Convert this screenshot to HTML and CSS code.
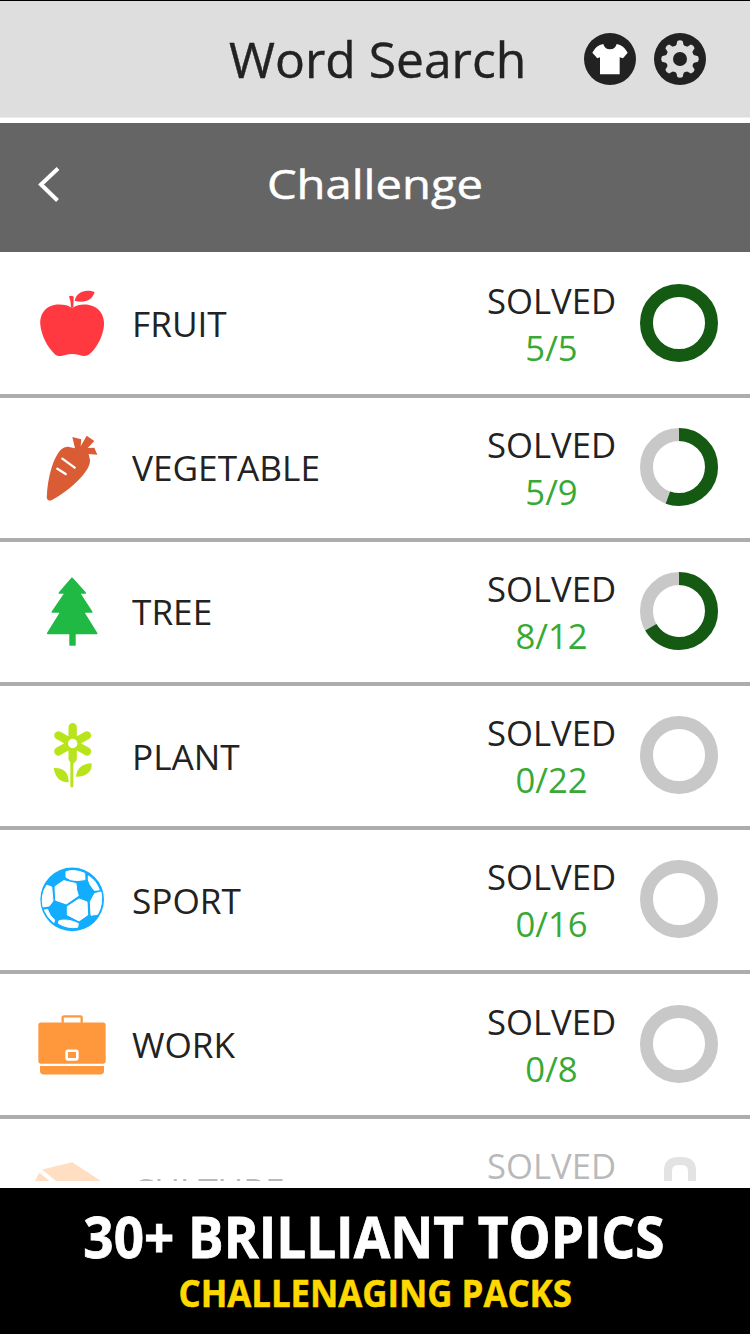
FILE: index.html
```html
<!DOCTYPE html>
<html lang="en">
<head>
<meta charset="utf-8">
<title>Word Search</title>
<link rel="stylesheet" href="styles.css">
</head>
<body>
<div class="app">
  <header class="topbar">
    <h1 class="topbar-title"><span>Word Search</span></h1>
    <div class="topbar-actions">
      <svg class="round-icon" viewBox="0 0 156 156"><circle cx="78" cy="78" r="78" fill="#222"/><path fill="#fff" d="M58 33Q62 49 78 49Q94 49 98 33Q119 37 131 59L117 76L107 73V124H48V73L40 76L25 59Q36 37 58 33Z"/></svg>
      <svg class="round-icon" viewBox="0 0 156 156"><circle cx="78" cy="78" r="78" fill="#222"/><g fill="#dedede"><circle cx="78" cy="78" r="42"/><path id="tooth" d="M61 44Q69 37 70 24Q78 19 86 24Q87 37 95 44V112Q87 119 86 132Q78 137 70 132Q69 119 61 112Z"/><use href="#tooth" transform="rotate(45 78 78)"/><use href="#tooth" transform="rotate(90 78 78)"/><use href="#tooth" transform="rotate(135 78 78)"/></g><circle cx="78" cy="78" r="21" fill="#222"/></svg>
    </div>
  </header>
  <nav class="subbar">
    <svg class="back" viewBox="0 0 24 38"><path d="M21 3.500L4 19.500L20.500 35.500" fill="none" stroke="#fff" stroke-width="4"/></svg>
    <h2 class="subbar-title"><span>Challenge</span></h2>
  </nav>
  <main class="list">
    <section class="row">
      <svg class="topic" viewBox="36 41 240 240" fill="#ff393f"><path d="M157 114C170 103 190 101 207 104C237 110 254 134 252 164C250 198 229 235 208 252C200 259 188 258 178 254Q157 248 136 254C122 259 111 258 104 251C83 231 65 198 61 164C58 134 74 110 102 104C120 101 143 103 157 114Z"/><path d="M147 78Q154 74 161 79L160 112H153Q153 94 147 78Z"/><path d="M164 91C169 67 196 54 224 66C215 94 188 98 164 91Z"/></svg>
      <span class="name">FRUIT</span>
      <div class="score"><span>SOLVED</span><span class="count">5/5</span></div>
      <svg class="ring" viewBox="0 0 78 78"><circle cx="39" cy="39" r="32.500" class="done"/></svg>
    </section>
    <section class="row">
      <svg class="topic" viewBox="36 23 240 240" fill="#da5c34"><path d="M144 79L165 84L157 50L184 57L182 78L200 46L223 62L203 83L223 82L232 103L206 101L210 119C213 151 154 207 96 239C85 244 78 236 81 223C84 174 98 113 124 87Q133 78 144 79Z"/><path d="M127 115L164 142M112 145L137 161" stroke="#fff" stroke-width="7" stroke-linecap="round"/></svg>
      <span class="name">VEGETABLE</span>
      <div class="score"><span>SOLVED</span><span class="count">5/9</span></div>
      <svg class="ring" viewBox="0 0 78 78"><circle cx="39" cy="39" r="32.500" class="track"/><circle cx="39" cy="39" r="32.500" class="done" pathLength="9" stroke-dasharray="5 9" transform="rotate(-90 39 39)"/></svg>
    </section>
    <section class="row">
      <svg class="topic" viewBox="36 21 240 240" fill="#20b944" stroke="#20b944" stroke-width="5" stroke-linejoin="round"><path d="M156 40L196 84H178L215 141H190L230 205H83L123 141H97L136 84H118Z"/><path d="M149 206H166V241H149Z" stroke-width="2"/></svg>
      <span class="name">TREE</span>
      <div class="score"><span>SOLVED</span><span class="count">8/12</span></div>
      <svg class="ring" viewBox="0 0 78 78"><circle cx="39" cy="39" r="32.500" class="track"/><circle cx="39" cy="39" r="32.500" class="done" pathLength="12" stroke-dasharray="8 12" transform="rotate(-90 39 39)"/></svg>
    </section>
    <section class="row">
      <svg class="topic" viewBox="36 18.600 240 240"><g stroke="#b8e41b" stroke-linecap="round" stroke-width="25" fill="none"><path d="M158 52V146M115 77L201 125M115 125L201 77"/></g><path fill="#b8e41b" d="M151 155H165L160 162V230Q156 236 151 230Z"/><circle cx="158" cy="101" r="14" fill="#fff"/><path fill="#b8e41b" d="M101 175Q145 172 146 217C125 218 107 208 101 175ZM215 160C217 187 198 200 168 201C170 174 189 161 215 160Z"/></svg>
      <span class="name">PLANT</span>
      <div class="score"><span>SOLVED</span><span class="count">0/22</span></div>
      <svg class="ring" viewBox="0 0 78 78"><circle cx="39" cy="39" r="32.500" class="track"/></svg>
    </section>
    <section class="row">
      <svg class="topic" viewBox="36 16.200 240 240"><circle cx="156.500" cy="134.500" r="95.500" fill="#12adff"/><g fill="#fff" stroke="#fff" stroke-width="3" stroke-linejoin="round"><path d="M105 96L131 78L168 87L170 106L175 123L139 148L107 137Z"/><path d="M142 156L177 133L201 142L203 181L177 199L142 181Z"/><path d="M138 51Q164 43 194 56L195 75L172 78Q150 78 138 68Z"/><path d="M205 64Q228 77 238 106L223 107Q208 91 205 76Z"/><path d="M224 117L243 112Q250 148 233 179L213 182L211 141Z"/><path d="M117 198Q146 192 175 207L173 218Q142 223 115 206Z"/><path d="M80 92L95 97L99 139L88 154L69 157Q61 121 80 92Z"/><path d="M73 166L83 165Q88 184 104 196L102 204Q83 191 73 166Z"/></g></svg>
      <span class="name">SPORT</span>
      <div class="score"><span>SOLVED</span><span class="count">0/16</span></div>
      <svg class="ring" viewBox="0 0 78 78"><circle cx="39" cy="39" r="32.500" class="track"/></svg>
    </section>
    <section class="row">
      <svg class="topic" viewBox="36 13.800 240 240"><g fill="#ff983c"><rect x="55" y="66" width="202" height="124" rx="8"/><path d="M60 197H252V212Q252 222 242 222H71Q60 222 60 211Z"/></g><path d="M128 67V52Q128 48 132 48H181Q185 48 185 52V67" fill="none" stroke="#ff983c" stroke-width="7"/><rect x="140" y="151" width="32" height="26" rx="4" fill="none" stroke="#fff" stroke-width="8"/></svg>
      <span class="name">WORK</span>
      <div class="score"><span>SOLVED</span><span class="count">0/8</span></div>
      <svg class="ring" viewBox="0 0 78 78"><circle cx="39" cy="39" r="32.500" class="track"/></svg>
    </section>
    <section class="row locked">
      <svg class="topic" viewBox="96 56.400 240 240" fill="#ff983c"><path d="M126 118L217 96L330 170H190Z"/><path d="M119 128L170 170H100Q107 141 119 128Z"/></svg>
      <span class="name">CULTURE</span>
      <div class="score"><span>SOLVED</span></div>
      <svg class="ring" viewBox="0 0 78 78"><path d="M28 50V22Q28 12 38 12H42Q52 12 52 22V50" fill="none" stroke="#a6a6a6" stroke-width="8"/></svg>
    </section>
  </main>
  <footer class="promo">
    <p class="promo-main"><span>30+ BRILLIANT TOPICS</span></p>
    <p class="promo-sub"><span>CHALLENAGING PACKS</span></p>
  </footer>
</div>
</body>
</html>
```

FILE: styles.css
```css
* { box-sizing: border-box; }
body { margin: 0; background: #fff; font-family: "Open Sans", "Noto Sans", sans-serif; color: #222; }
h1, h2, p { margin: 0; font-weight: 400; }
h1 span, h2 span, p span { display: inline-block; }
.app { width: 750px; height: 1334px; display: flex; flex-direction: column; overflow: hidden; }
.topbar { height: 118px; flex: none; background: #dedede; border-top: 1px solid #000; border-bottom: 1px solid #ececec; display: grid; grid-template-columns: 584px auto; align-items: center; }
.topbar-title { font-size: 49px; line-height: 60px; padding-left: 228.500px; white-space: nowrap; -webkit-text-stroke: .4px #222; }
.topbar-title span { transform: scaleX(1.016); transform-origin: 0 50%; }
.topbar-actions { display: flex; gap: 18px; }
.round-icon { width: 52px; height: 52px; display: block; }
.subbar { height: 129px; flex: none; margin-top: 5px; background: #656565; color: #fff; display: grid; grid-template-columns: 24px 1fr; padding: 0 61px 0 37px; align-items: center; }
.back { width: 24px; height: 38px; margin-top: -7px; }
.subbar-title { font-size: 41px; line-height: 56px; text-align: center; margin: -10px -24px 0 -24px; -webkit-text-stroke: .5px #fff; }
.subbar-title span { transform: scaleX(1.15); }
.list { flex: none; height: 929px; padding-top: 1.500px; overflow: hidden; }
.row { height: 144.200px; border-bottom: 4px solid #adadad; padding: 0 32px; display: grid; grid-template-columns: 80px 1fr 150px 78px; align-items: center; }
.topic { width: 80px; height: 80px; display: block; }
.name { font-size: 34px; line-height: 46px; margin-left: 20px; padding-top: 1px; white-space: nowrap; transform: scaleX(1.035); transform-origin: 0 50%; }
.score { font-size: 34px; line-height: 47px; display: flex; flex-direction: column; align-items: center; margin-right: 27px; padding-top: 2px; white-space: nowrap; transform: scaleX(1.02); }
.count { color: #39a935; }
.ring { width: 78px; height: 78px; display: block; margin-top: -2px; }
.ring circle { fill: none; stroke-width: 13; }
.track { stroke: #c8c8c8; }
.done { stroke: #145a12; }
.locked > * { opacity: .31; }
.locked .name { padding-top: 4px; }
.locked .score { padding-bottom: 47px; }
.promo { height: 146px; margin-top: 7px; flex: none; background: #000; text-align: center; }
.promo p { font-weight: 700; white-space: nowrap; display: flex; justify-content: center; }
.promo .promo-main { font-size: 58px; line-height: 60px; color: #fff; padding: 18px 3px 0 0; -webkit-text-stroke: .8px #fff; }
.promo-main span { transform: scaleX(.914); }
.promo .promo-sub { font-size: 37px; line-height: 50px; color: #ffd800; padding: 2px 0 0 1px; -webkit-text-stroke: .5px #ffd800; }
.promo-sub span { transform: scaleX(.94); }
```
